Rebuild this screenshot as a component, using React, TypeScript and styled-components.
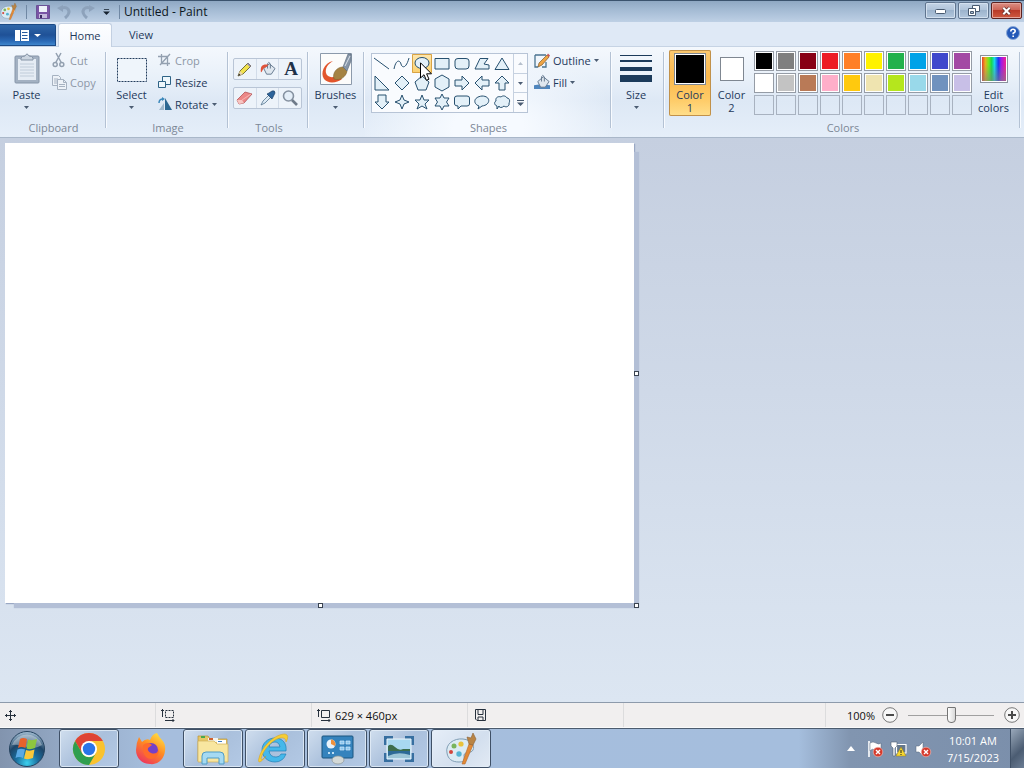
import React from "react";
import styled, { createGlobalStyle, css } from "styled-components";

const GlobalStyle = createGlobalStyle`
  * { box-sizing: border-box; }
  body {
    margin: 0;
    font-family: "Open Sans", "Noto Sans", sans-serif;
    font-size: 11px;
    line-height: 13px;
    color: #1e395b;
  }
  button { font: inherit; color: inherit; background: none; border: 0; padding: 0; margin: 0; }
  svg { display: block; flex: none; overflow: visible; }
  h1, h2, p { margin: 0; font: inherit; }
`;

const Desktop = styled.div`
  display: flex;
  flex-direction: column;
  min-height: 100vh;
`;

/* ---------- title bar ---------- */
const TitleBar = styled.header`
  display: flex;
  align-items: center;
  height: 22px;
  border-top: 1px solid #3b536e;
  background: linear-gradient(#8fa8c3, #a3bad3 40%, #bed0e5);
`;
const QuickAccess = styled.div`
  display: flex;
  align-items: center;
  gap: 7px;
`;
const IconButton = styled.button`
  display: flex;
  align-items: center;
  justify-content: center;
`;
const TitleRule = styled.span`
  width: 1px;
  height: 14px;
  background: #7088a4;
  margin: 0 2px;
`;
const Title = styled.h1`
  flex: 1;
  padding-left: 2px;
  font-size: 12px;
  line-height: 16px;
  color: #0c1722;
`;
const WindowButtons = styled.div`
  display: flex;
  gap: 2px;
  align-self: flex-start;
  padding: 1px 2px 0 0;
`;
const WindowButton = styled.button<{ $close?: boolean }>`
  display: flex;
  align-items: center;
  justify-content: center;
  width: 31px;
  height: 17px;
  border: 1px solid ${p => (p.$close ? "#5c2220" : "#60758f")};
  border-radius: 2px;
  box-shadow: inset 0 0 0 1px ${p => (p.$close ? "#e5a69c" : "#d3e0ef")};
  background: ${p =>
    p.$close
      ? "linear-gradient(#dc8f84, #cd6557 45%, #b93a28 50%, #cf5a40)"
      : "linear-gradient(#c4d4e6, #b0c4da 45%, #9db4cd 50%, #b3c7dd)"};
`;

/* ---------- tabs ---------- */
const TabRow = styled.nav`
  display: flex;
  align-items: flex-end;
  height: 24px;
  background: #dfe9f6;
`;
const FileTab = styled.button`
  display: flex;
  align-items: center;
  justify-content: center;
  gap: 5px;
  width: 56px;
  height: 22px;
  border: 1px solid #1b4a86;
  border-left: 0;
  border-radius: 0 2px 0 0;
  background: linear-gradient(#2f67a9, #1f5197 50%, #2a69b5 80%, #3f86cc);
`;
const Tab = styled.button<{ $active?: boolean }>`
  width: 54px;
  height: 23px;
  line-height: 21px;
  margin-left: 2px;
  color: #1e395b;
  ${p =>
    p.$active &&
    css`
      position: relative;
      height: 24px;
      margin-bottom: -1px;
      border: 1px solid #c3d0e2;
      border-bottom: 0;
      border-radius: 3px 3px 0 0;
      background: linear-gradient(#fdfeff, #f5f8fd);
    `}
`;
const HelpButton = styled(IconButton)`
  margin: 0 4px 6px auto;
`;

/* ---------- ribbon ---------- */
const Ribbon = styled.section`
  display: flex;
  height: 92px;
  padding: 3px 3px 0 0;
  border-top: 1px solid #c6d3e4;
  border-bottom: 1px solid #a9b7c9;
  background: linear-gradient(#f4f8fd, #e8f0f9 35%, #dde8f5 60%, #e5eef9);
`;
const Group = styled.section<{ $width?: number; $hot?: boolean }>`
  display: flex;
  flex-direction: column;
  flex: ${p => (p.$width ? `0 0 ${p.$width}px` : "1")};
  position: relative;
  background: ${p =>
    p.$hot ? "radial-gradient(ellipse at 50% 90%, #f6faff 20%, #f6faff00 75%)" : "none"};
  &::after {
    content: "";
    position: absolute;
    right: 0;
    top: 2px;
    bottom: 9px;
    width: 2px;
    background: linear-gradient(90deg, #b4c2d4 50%, #f8fbff 50%);
  }
`;
const GroupBody = styled.div<{ $pad?: number; $gap?: number }>`
  display: flex;
  align-items: flex-start;
  height: 69px;
  gap: ${p => p.$gap || 0}px;
  padding-left: ${p => p.$pad || 0}px;
`;
const GroupLabel = styled.h2`
  line-height: 18px;
  text-align: center;
  color: #7c8796;
`;
const BigButton = styled.button<{ $width: number }>`
  display: flex;
  flex-direction: column;
  align-items: center;
  width: ${p => p.$width}px;
  padding-top: 3px;
`;
const BigIcon = styled.span`
  display: flex;
  align-items: center;
  justify-content: center;
  height: 32px;
  margin-bottom: 3px;
`;
const ArrowLine = styled.span`
  display: flex;
  align-items: center;
  height: 13px;
`;
const Column = styled.div`
  display: flex;
  flex-direction: column;
`;
const SmallButton = styled.button`
  display: flex;
  align-items: center;
  gap: 3px;
  height: 22px;
  padding-bottom: 2px;
  &:disabled { color: #8d97a6; }
`;
const ToolGrid = styled.div`
  display: flex;
  flex-direction: column;
  gap: 7px;
  padding-top: 8px;
`;
const ToolRow = styled.div`
  display: flex;
  width: 69px;
  height: 22px;
  border: 1px solid #b9c5d6;
  border-radius: 2px;
  background: #edf3fa;
`;
const ToolButton = styled(IconButton)`
  flex: 1;
  & + & { border-left: 1px solid #d2dce9; }
`;
const Gallery = styled.div`
  display: flex;
  width: 157px;
  height: 60px;
  margin-top: 3px;
  border: 1px solid #b7c4d6;
  background: #f9fbfe;
`;
const ShapeGrid = styled.div`
  display: grid;
  flex: 1;
  grid-template-columns: repeat(7, 20px);
  grid-auto-rows: 19px;
`;
const ShapeButton = styled.button<{ $hot?: boolean }>`
  display: flex;
  align-items: center;
  justify-content: center;
  border-radius: 1px;
  ${p =>
    p.$hot &&
    css`
      background: linear-gradient(#fde7b0, #fbd06d);
      box-shadow: inset 0 0 0 1px #d9a344;
    `}
`;
const GalleryScroll = styled.div`
  display: flex;
  flex-direction: column;
  width: 14px;
`;
const ScrollButton = styled(IconButton)`
  flex: 1;
  border-left: 1px solid #c6d1e0;
  & + & { border-top: 1px solid #c6d1e0; }
`;
const ColorButton = styled(BigButton)<{ $active?: boolean }>`
  height: 66px;
  ${p =>
    p.$active &&
    css`
      border-radius: 2px;
      background: linear-gradient(#fbc971, #fcb84c 40%, #fecb67 75%, #ffdf8c);
      box-shadow: inset 0 0 0 1px #c1914a;
    `}
`;
const ColorBox = styled.span<{ $size: number; $color: string }>`
  width: ${p => p.$size}px;
  height: ${p => p.$size}px;
  border: 1px solid #7f8791;
  box-shadow: inset 0 0 0 1px #ffffff;
  background: ${p => p.$color};
`;
const Palette = styled.div`
  display: grid;
  grid-template-columns: repeat(10, 20px);
  gap: 2px;
  padding: 1px 2px 0;
`;
const Swatch = styled.button<{ $color?: string }>`
  height: 20px;
  border: 1px solid ${p => (p.$color ? "#959ca6" : "#a8b2c0")};
  box-shadow: ${p => (p.$color ? "inset 0 0 0 1px #ffffff" : "none")};
  background: ${p => p.$color || "transparent"};
`;
const Spectrum = styled.span`
  width: 28px;
  height: 28px;
  padding: 1px;
  border: 1px solid #8a929d;
  background:
    linear-gradient(#80808000 30%, #80808099) content-box,
    linear-gradient(90deg, #e8402c, #e8b020 14%, #70e820 28%, #18d850 40%, #18d8e8 52%, #1838f0 68%, #a018e8 80%, #f02090) content-box,
    #ffffff;
`;

/* ---------- workspace ---------- */
const Workspace = styled.main`
  flex: 1;
  padding: 5px;
  background: linear-gradient(#c5cfe0, #cfd9e8 45%, #dce6f2);
`;
const Canvas = styled.div`
  position: relative;
  width: 629px;
  height: 460px;
  background: #ffffff;
  box-shadow: 7px 7px 1px -2px #b3bfd6, 1px 1px 1px #9aa8c4;
`;
const Handle = styled.span<{ $x: string; $y: string }>`
  position: absolute;
  left: ${p => p.$x};
  top: ${p => p.$y};
  width: 5px;
  height: 5px;
  border: 1px solid #3a4350;
  background: #ffffff;
`;
const Pointer = styled.svg`
  position: absolute;
  left: 420px;
  top: 62px;
  pointer-events: none;
`;

/* ---------- status bar ---------- */
const StatusBar = styled.footer`
  display: flex;
  height: 26px;
  border-top: 1px solid #8d9aab;
  border-bottom: 1px solid #fafafa;
  background: #f1efef;
  color: #101010;
`;
const StatusCell = styled.div<{ $grow?: boolean }>`
  display: flex;
  align-items: center;
  gap: 4px;
  flex: ${p => (p.$grow ? "1" : "0 0 156px")};
  padding-left: 5px;
  border-right: 1px solid #dcdcdd;
`;
const ZoomArea = styled.div`
  display: flex;
  align-items: center;
  justify-content: flex-end;
  width: 198px;
  padding-right: 4px;
`;
const ZoomText = styled.span`
  margin-right: 7px;
`;
const ZoomSlider = styled.input`
  appearance: none;
  width: 86px;
  height: 18px;
  margin: 0 10px;
  background: linear-gradient(#a0a0a0, #a0a0a0) center / 100% 1px no-repeat;
  &::-webkit-slider-thumb {
    appearance: none;
    width: 9px;
    height: 16px;
    border: 1px solid #757575;
    border-radius: 1px 1px 4px 4px;
    background: linear-gradient(90deg, #ffffff, #d8d8d8);
  }
`;

/* ---------- taskbar ---------- */
const Taskbar = styled.nav`
  display: flex;
  align-items: stretch;
  height: 40px;
  border-top: 1px solid #4c5b6e;
  background: linear-gradient(90deg, #8294ae, #93a8c4 6%, #a6bedd 15%, #a5bedd 78%, #8195b0 83%, #7b8fab);
`;
const Start = styled(IconButton)`
  width: 54px;
  margin-right: 5px;
`;
const TaskButton = styled.button<{ $state: "open" | "active" | "pinned" }>`
  display: flex;
  align-items: center;
  justify-content: center;
  width: 60px;
  margin-right: 2px;
  border-radius: 3px;
  ${p =>
    p.$state !== "pinned" &&
    css`
      border: 1px solid #3f5066;
      box-shadow: inset 0 0 0 1px #e4edf7cc;
      background: ${p.$state === "active"
        ? "linear-gradient(135deg, #e6eef8, #d3dfee 60%, #e2eaf4)"
        : "linear-gradient(135deg, #d0deee, #aac0dc 50%, #b3c9e5)"};
    `}
`;
const Tray = styled.div`
  display: flex;
  align-items: center;
  gap: 8px;
  margin-left: auto;
`;
const TrayButton = styled(IconButton)`
  width: 16px;
`;
const Clock = styled.time`
  width: 58px;
  margin-left: 5px;
  text-align: center;
  line-height: 17px;
  color: #ffffff;
`;
const ShowDesktop = styled.button`
  align-self: stretch;
  width: 14px;
  border-left: 1px solid #3f5066;
  background: linear-gradient(135deg, #9aa9bb, #4b5c72 60%, #6b7d94);
`;

const ink = "#27506f";

const shapes: { name: string; d: string }[] = [
  { name: "Line", d: "M2 4L17 15" },
  { name: "Curve", d: "M2 15C4 5 8 6 9 10S14 15 17 4" },
  { name: "Oval", d: "M3 9A7 5.500 0 1 0 17 9A7 5.500 0 1 0 3 9Z" },
  { name: "Rectangle", d: "M3 4.500H17V15H3Z" },
  { name: "Rounded rectangle", d: "M6 4.500H14Q17 4.500 17 7V12Q17 15 14 15H6Q3 15 3 12V7Q3 4.500 6 4.500Z" },
  { name: "Polygon", d: "M3 15L8 4.500H16L12 10L17 11V15Z" },
  { name: "Triangle", d: "M10 4L17 15.500H3Z" },
  { name: "Right triangle", d: "M3 3V17H17Z" },
  { name: "Diamond", d: "M10 3L17 10L10 17L3 10Z" },
  { name: "Pentagon", d: "M10 3L17 9L14 17H6L3 9Z" },
  { name: "Hexagon", d: "M10 2L17 6V14L10 18L3 14V6Z" },
  { name: "Right arrow", d: "M3 7H10V3L17 10L10 17V13H3Z" },
  { name: "Left arrow", d: "M17 7H10V3L3 10L10 17V13H17Z" },
  { name: "Up arrow", d: "M7 17V10H3L10 3L17 10H13V17Z" },
  { name: "Down arrow", d: "M6 3V10H3L10 17L17 10H14V3Z" },
  { name: "Four-point star", d: "M10 3L12 8L17 10L12 12L10 17L8 12L3 10L8 8Z" },
  { name: "Five-point star", d: "M10 3L12 8H17L13 12L15 17L10 14L5 17L7 12L3 8H8Z" },
  { name: "Six-point star", d: "M10 2L12 6H17L14.500 10L17 14H12L10 18L8 14H3L5.500 10L3 6H8Z" },
  { name: "Rounded callout", d: "M5 4H15Q17.500 4 17.500 6V12Q17.500 14 15 14H9L6 17V14Q2.500 14 2.500 12V6Q2.500 4 5 4Z" },
  { name: "Oval callout", d: "M7 14C1 12 1 5 10 4C19 4 19 13 10 14L6 17Z" },
  { name: "Cloud callout", d: "M5 14C2 13 2 10 4 9C3 5 7 4 9 5C11 3 14 4 15 6C18 6 18 10 17 11C18 14 14 16 12 14C10 16 7 16 7 14L5 17Z" },
];

const palette = [
  "#000000", "#7f7f7f", "#880015", "#ed1c24", "#ff7f27", "#fff200", "#22b14c", "#00a2e8", "#3f48cc", "#a349a4",
  "#ffffff", "#c3c3c3", "#b97a57", "#ffaec9", "#ffc90e", "#efe4b0", "#b5e61d", "#99d9ea", "#7092be", "#c8bfe7",
];

const Caret = ({ color = "#4b5c72", size = 5 }: { color?: string; size?: number }) => (
  <svg width={size} height="3" viewBox="0 0 6 3" preserveAspectRatio="none"><path d="M0 0H6L3 3Z" fill={color} /></svg>
);

const PaletteIcon = ({ size }: { size: number }) => (
  <svg width={size} height={size} viewBox="0 0 32 32">
    <path d="M2 20C0 11 9 5 18 6C27 7 30 13 28 17C26 21 20 18 19 22C19 26 21 29 14 29C7 29 3 26 2 20Z" fill="#dcebf3" stroke="#7f9db4" />
    <circle cx="6" cy="19" r="2" fill="#d3453c" /><circle cx="9" cy="13" r="2.500" fill="#79b45c" />
    <circle cx="16" cy="11" r="2.600" fill="#e9c23a" /><circle cx="14" cy="21" r="2.700" fill="#55b4d2" />
    <path d="M17 31L24 11L28 12L20 31Z" fill="#e38a35" stroke="#b0662a" strokeWidth=".6" />
    <path d="M24 11L22 4L26 5L28 0L31 6L28 12Z" fill="#b98445" stroke="#8a5f30" strokeWidth=".6" />
  </svg>
);

const Pencil = () => (
  <svg width="17" height="17" viewBox="0 0 17 17">
    <path d="M2 15L4 10L12 2L15 5L7 13Z" fill="#f1e24d" stroke="#55521f" strokeWidth=".8" />
    <path d="M12 2L15 5L14 6L11 3Z" fill="#8f88bd" /><path d="M2 15L4 10L7 13Z" fill="#ecd7b0" /><path d="M2 15L3 12.500L4.500 14Z" fill="#222" />
  </svg>
);
const Bucket = ({ pouring }: { pouring?: boolean }) => (
  <svg width="16" height="16" viewBox="0 0 17 17">
    {!pouring && <path d="M0 12L7 11L17 12V16H0Z" fill="#4f86be" />}
    <path d="M4 8L10 3L16 8L12 14L7 14Z" fill="#dfe7ef" stroke="#62768d" />
    <path d="M8 8V3Q9 0 11 3V8" fill="none" stroke="#62768d" />
    {pouring && <path d="M9 4C3 3 0 5 1 12C3 11 2 8 7 6Z" fill="#e0543c" />}
  </svg>
);
const ErrorBadge = ({ x, y }: { x: number; y: number }) => (
  <g transform={`translate(${x} ${y})`}>
    <circle r="4.800" fill="#d63a2c" stroke="#f3c3bd" strokeWidth=".6" />
    <path d="M-2 -2L2 2M2 -2L-2 2" stroke="#fff" strokeWidth="1.400" />
  </g>
);
const RoundSign = ({ plus }: { plus?: boolean }) => (
  <svg width="16" height="16" viewBox="0 0 16 16">
    <circle cx="8" cy="8" r="7.300" fill="#f7f7f7" stroke="#777" />
    <path d={plus ? "M4 8H12M8 4V12" : "M4 8H12"} stroke="#4a4a4a" strokeWidth="2" />
  </svg>
);

export default function App() {
  return (
    <Desktop>
      <GlobalStyle />
      <TitleBar>
        <QuickAccess>
          <PaletteIcon size={17} />
          <TitleRule />
          <IconButton aria-label="Save">
            <svg width="14" height="14" viewBox="0 0 14 14">
              <path d="M.5.500H13.500V13.500H.5Z" fill="#7a55a5" stroke="#6a5296" />
              <path d="M3 1H11V7H3Z" fill="#eef2fa" /><path d="M3 9H11V13H3Z" fill="#c5bbdc" /><path d="M4 10H6V13H4Z" fill="#3b2b60" />
            </svg>
          </IconButton>
          <IconButton aria-label="Undo" disabled>
            <svg width="16" height="14" viewBox="0 0 16 14"><path d="M3 4Q8 1 11 4Q14 8 8 13" fill="none" stroke="#8da2bb" strokeWidth="3" /><path d="M0 3L6 0V7Z" fill="#8da2bb" /></svg>
          </IconButton>
          <IconButton aria-label="Redo" disabled>
            <svg width="16" height="14" viewBox="0 0 16 14"><path d="M12 4Q7 1 4 4Q1 8 7 13" fill="none" stroke="#8da2bb" strokeWidth="3" /><path d="M15 3L9 0V7Z" fill="#8da2bb" /></svg>
          </IconButton>
          <IconButton aria-label="Customize quick access toolbar">
            <svg width="7" height="6" viewBox="0 0 8 7"><path d="M1 0H7V1H1ZM0 3H8L4 7Z" fill="#16222f" /></svg>
          </IconButton>
          <TitleRule />
        </QuickAccess>
        <Title>Untitled - Paint</Title>
        <WindowButtons>
          <WindowButton aria-label="Minimize">
            <svg width="11" height="5" viewBox="0 0 11 5"><rect x=".5" y="1.500" width="10" height="4" rx="1" fill="#fff" stroke="#485a70" /></svg>
          </WindowButton>
          <WindowButton aria-label="Restore">
            <svg width="12" height="11" viewBox="0 0 12 11" fill="#fff" stroke="#485a70">
              <path d="M4.500.5H11.500V6.500H4.500Z" /><path d="M.5 3.500H7.500V10.500H.5Z" /><path d="M2.500 6.500H5.500V8.500H2.500Z" fill="#a9bdd3" />
            </svg>
          </WindowButton>
          <WindowButton $close aria-label="Close">
            <svg width="11" height="8" viewBox="0 0 12 10"><path d="M2 1L10 9M10 1L2 9" stroke="#5e2b27" strokeWidth="4.500" /><path d="M2 1L10 9M10 1L2 9" stroke="#fff" strokeWidth="2.600" /></svg>
          </WindowButton>
        </WindowButtons>
      </TitleBar>

      <TabRow>
        <FileTab aria-label="Paint menu">
          <svg width="14" height="11" viewBox="0 0 14 11"><path d="M0 0H14V11H0Z" fill="#fff" /><path d="M5.500 0V11M7 2.500H12.500M7 5.500H12.500M7 8.500H12.500" stroke="#2a5c9e" /></svg>
          <Caret color="#ffffff" size={7} />
        </FileTab>
        <Tab $active>Home</Tab>
        <Tab>View</Tab>
        <HelpButton aria-label="Help">
          <svg width="14" height="14" viewBox="0 0 14 14">
            <circle cx="7" cy="7" r="6.500" fill="#2459b8" stroke="#8aa8d8" />
            <path d="M4.800 5.500Q4.800 3.300 7 3.300T9.200 5.300Q9.200 6.400 7.200 7.300V8.300M7.200 9.500V11" fill="none" stroke="#fff" strokeWidth="1.600" />
          </svg>
        </HelpButton>
      </TabRow>

      <Ribbon>
        <Group $width={107}>
          <GroupBody $pad={6} $gap={5}>
            <BigButton $width={41}>
              <BigIcon>
                <svg width="26" height="32" viewBox="0 0 26 32">
                  <rect x="1" y="3" width="24" height="27" rx="1" fill="#a3b1c2" stroke="#8796a9" />
                  <path d="M4 6H22V27H4Z" fill="#e5ecf4" /><path d="M7 5Q8 3 11 3Q13-1 15 3Q18 3 19 5V7H7Z" fill="#cbd5e0" stroke="#8594a6" />
                  <path d="M6 11H20M6 14H20M6 17H20M6 20H20M6 23H20" stroke="#c0ccd9" />
                </svg>
              </BigIcon>
              Paste
              <ArrowLine><Caret /></ArrowLine>
            </BigButton>
            <Column>
              <SmallButton disabled>
                <svg width="15" height="16" viewBox="0 0 15 16" fill="none" stroke="#93a0b0" strokeWidth="1.500">
                  <path d="M4 1L9.500 11M9 1L3.500 11" /><circle cx="3.200" cy="12.500" r="2" /><circle cx="9.800" cy="12.500" r="2" />
                </svg>
                Cut
              </SmallButton>
              <SmallButton disabled>
                <svg width="15" height="16" viewBox="0 0 15 16" fill="#edf2f8" stroke="#a6b2c1">
                  <path d="M.5 1.500H6.500L8.500 3.500V11.500H.5ZM2 5H6M2 7H6M2 9H6" /><path d="M5.500 5.500H11.500L14.500 8.500V15.500H5.500ZM11.500 5.500V8.500H14.500M7 10.500H13M7 12.500H13" />
                </svg>
                Copy
              </SmallButton>
            </Column>
          </GroupBody>
          <GroupLabel>Clipboard</GroupLabel>
        </Group>

        <Group $width={122}>
          <GroupBody $pad={4} $gap={6}>
            <BigButton $width={41}>
              <BigIcon>
                <svg width="31" height="26" viewBox="0 0 31 26"><path d="M1.500 2.500H30.500V25.500H1.500Z" fill="#eff5fb" stroke="#223c5c" strokeDasharray="2 1" /></svg>
              </BigIcon>
              Select
              <ArrowLine><Caret /></ArrowLine>
            </BigButton>
            <Column>
              <SmallButton disabled>
                <svg width="14" height="14" viewBox="0 0 14 14" fill="none" stroke="#93a0b0" strokeWidth="1.300"><path d="M3.500 1V10.500H12M0 3.500H9.500V13M2 12L12 1" /></svg>
                Crop
              </SmallButton>
              <SmallButton>
                <svg width="14" height="14" viewBox="0 0 14 14" fill="#eef7fc" stroke="#2e6386"><path d="M4.500 1.500H12.500V9.500H4.500Z" /><path d="M.5 6.500H7.500V12.500H.5Z" /></svg>
                Resize
              </SmallButton>
              <SmallButton>
                <svg width="14" height="14" viewBox="0 0 14 14"><path d="M7 1L14 13H7Z" fill="#2c6792" /><path d="M6 6V13H1Z" fill="#9eb7cc" /><path d="M1 6Q1 2 5 2" fill="none" stroke="#3b88bb" strokeWidth="1.500" /><path d="M4 0L7 2L4 4Z" fill="#3b88bb" /></svg>
                Rotate
                <Caret />
              </SmallButton>
            </Column>
          </GroupBody>
          <GroupLabel>Image</GroupLabel>
        </Group>

        <Group $width={80}>
          <GroupBody $pad={4}>
            <ToolGrid>
              <ToolRow>
                <ToolButton aria-label="Pencil"><Pencil /></ToolButton>
                <ToolButton aria-label="Fill with color"><Bucket pouring /></ToolButton>
                <ToolButton aria-label="Text">
                  <svg width="14" height="14" viewBox="0 0 14 14"><text x="8" y="13" textAnchor="middle" fontFamily="Liberation Serif, serif" fontWeight="bold" fontSize="19" fill="#1f3149">A</text></svg>
                </ToolButton>
              </ToolRow>
              <ToolRow>
                <ToolButton aria-label="Eraser">
                  <svg width="17" height="15" viewBox="0 0 17 15"><path d="M1 9L9 1L16 3L8 12L3 13Z" fill="#ec8787" stroke="#b25658" strokeWidth=".8" /><path d="M1 9L6 9L8 12L3 13Z" fill="#f7c5c2" /><path d="M6 9L15 3" stroke="#f9b5b2" /></svg>
                </ToolButton>
                <ToolButton aria-label="Color picker">
                  <svg width="16" height="16" viewBox="0 0 16 16"><path d="M1 15L3 11L9 5L11 7L5 13Z" fill="#dceaf5" stroke="#56758f" strokeWidth=".8" /><path d="M7 4L9 3L12 1Q15 0 15 3L13 7L12 9Z" fill="#2d649b" stroke="#1c3f66" strokeWidth=".7" /></svg>
                </ToolButton>
                <ToolButton aria-label="Magnifier">
                  <svg width="16" height="16" viewBox="0 0 16 16"><circle cx="6.500" cy="6" r="5" fill="#e4eef8" stroke="#8591a0" strokeWidth="1.600" /><path d="M10 10L15 15" stroke="#6f7b8a" strokeWidth="2.600" /></svg>
                </ToolButton>
              </ToolRow>
            </ToolGrid>
          </GroupBody>
          <GroupLabel>Tools</GroupLabel>
        </Group>

        <Group $width={56}>
          <GroupBody $pad={1}>
            <BigButton $width={51}>
              <BigIcon>
                <svg width="32" height="32" viewBox="0 0 32 32">
                  <path d="M.5.500H31.500V31.500H.5Z" fill="#fcfcfb" stroke="#8c9aab" />
                  <path d="M13 8C4 10 0 20 4 26C8 31 17 30 22 26L17 22C13 26 7 24 6 20C5 15 8 11 13 8Z" fill="#e2552c" />
                  <path d="M14 26C12 20 17 14 23 14L27 18C26 24 20 28 14 26Z" fill="#a58343" stroke="#7d6330" strokeWidth=".6" />
                  <path d="M23 14L28 1H31V8L27 18Z" fill="#8796a8" stroke="#566577" strokeWidth=".6" /><path d="M25 13L30 3" stroke="#dbe2ea" />
                </svg>
              </BigIcon>
              Brushes
              <ArrowLine><Caret /></ArrowLine>
            </BigButton>
          </GroupBody>
        </Group>

        <Group $width={247} $hot>
          <GroupBody $pad={6} $gap={6}>
            <Gallery>
              <ShapeGrid>
                {shapes.map(s => (
                  <ShapeButton key={s.name} aria-label={s.name} $hot={s.name === "Oval"}>
                    <svg width="20" height="20" viewBox="0 0 20 20">
                      <path d={s.d} fill={s.name === "Line" || s.name === "Curve" ? "none" : "#e3f0f8"} stroke={ink} strokeWidth="1" />
                    </svg>
                  </ShapeButton>
                ))}
              </ShapeGrid>
              <GalleryScroll>
                <ScrollButton aria-label="Scroll up" disabled><svg width="5" height="3" viewBox="0 0 5 3"><path d="M0 3H5L2.500 0Z" fill="#b5bfcc" /></svg></ScrollButton>
                <ScrollButton aria-label="Scroll down"><Caret /></ScrollButton>
                <ScrollButton aria-label="More shapes"><svg width="7" height="6" viewBox="0 0 7 6"><path d="M0 0H7V1H0ZM0 2.500H7L3.500 6Z" fill="#4b5c72" /></svg></ScrollButton>
              </GalleryScroll>
            </Gallery>
            <Column>
              <SmallButton>
                <svg width="16" height="15" viewBox="0 0 16 15">
                  <path d="M1 2H12M1 2V14H4M12 9V14H8" fill="none" stroke="#4a7390" strokeWidth="1.300" />
                  <path d="M4 14L5 10L13 2L15 4L8 12Z" fill="#efa445" stroke="#7d5a2a" strokeWidth=".7" /><path d="M13 2L15 4L16 2.500L14 .5Z" fill="#c8555a" />
                </svg>
                Outline
                <Caret />
              </SmallButton>
              <SmallButton>
                <Bucket />
                Fill
                <Caret />
              </SmallButton>
            </Column>
          </GroupBody>
          <GroupLabel>Shapes</GroupLabel>
        </Group>

        <Group $width={53}>
          <GroupBody $pad={1}>
            <BigButton $width={46}>
              <BigIcon>
                <svg width="32" height="28" viewBox="0 0 32 28"><path d="M0 0H32V1H0ZM0 5H32V7H0ZM0 12H32V16H0ZM0 20H32V27H0Z" fill="#1c3b5b" /></svg>
              </BigIcon>
              Size
              <ArrowLine><Caret /></ArrowLine>
            </BigButton>
          </GroupBody>
        </Group>

        <Group>
          <GroupBody $pad={4}>
            <ColorButton $width={42} $active>
              <BigIcon><ColorBox $size={32} $color="#000000" /></BigIcon>
              Color<br />1
            </ColorButton>
            <ColorButton $width={41}>
              <BigIcon><ColorBox $size={24} $color="#ffffff" /></BigIcon>
              Color<br />2
            </ColorButton>
            <Palette>
              {Array.from({ length: 30 }, (_, i) => (
                <Swatch key={i} $color={palette[i]} aria-label={palette[i] || "Empty custom color"} />
              ))}
            </Palette>
            <BigButton $width={39}>
              <BigIcon><Spectrum /></BigIcon>
              Edit<br />colors
            </BigButton>
          </GroupBody>
          <GroupLabel>Colors</GroupLabel>
        </Group>
      </Ribbon>

      <Workspace>
        <Canvas>
          <Handle $x="100%" $y="calc(50% - 2px)" />
          <Handle $x="calc(50% - 2px)" $y="100%" />
          <Handle $x="100%" $y="100%" />
        </Canvas>
      </Workspace>

      <StatusBar>
        <StatusCell>
          <svg width="11" height="11" viewBox="0 0 11 11"><path d="M5.500 0V11M0 5.500H11M4 2L5.500.5L7 2M4 9L5.500 10.500L7 9M2 4L.5 5.500L2 7M9 4L10.500 5.500L9 7" fill="none" stroke="#26303c" /></svg>
        </StatusCell>
        <StatusCell>
          <svg width="14" height="13" viewBox="0 0 14 13" fill="none" stroke="#26303c"><path d="M1.500 0V8M0 2L1.500.5L3 2M4 11.500H13M11.500 10L13 11.500L11.500 13" /><path d="M4.500 1.500H12.500V8.500H4.500Z" strokeDasharray="2 1" /></svg>
        </StatusCell>
        <StatusCell>
          <svg width="14" height="13" viewBox="0 0 14 13" fill="none" stroke="#26303c"><path d="M1.500 0V8M0 2L1.500.5L3 2M4 11.500H13M11.500 10L13 11.500L11.500 13M4.500 1.500H12.500V8.500H4.500Z" /></svg>
          629 × 460px
        </StatusCell>
        <StatusCell>
          <svg width="13" height="12" viewBox="0 0 13 12" fill="none" stroke="#26303c"><path d="M2.500.5H12.500V11.500H4L2.500 10ZM5 .5V5.500H10V.5M5 11V8H10V11" /></svg>
        </StatusCell>
        <StatusCell $grow />
        <ZoomArea>
          <ZoomText>100%</ZoomText>
          <IconButton aria-label="Zoom out"><RoundSign /></IconButton>
          <ZoomSlider type="range" min={0} max={100} defaultValue={50} aria-label="Zoom" />
          <IconButton aria-label="Zoom in"><RoundSign plus /></IconButton>
        </ZoomArea>
      </StatusBar>

      <Taskbar>
        <Start aria-label="Start">
          <svg width="38" height="38" viewBox="0 0 38 38">
            <defs>
              <radialGradient id="orb" cx=".5" cy=".9" r=".9"><stop offset="0" stopColor="#3bd0ee" /><stop offset=".35" stopColor="#1b6f9f" /><stop offset=".65" stopColor="#1d4568" /><stop offset="1" stopColor="#a9c3d8" /></radialGradient>
            </defs>
            <circle cx="19" cy="19" r="17.500" fill="url(#orb)" stroke="#24425e" />
            <path d="M4 15A16 16 0 0 1 34 15Q26 20 19 17T4 15Z" fill="#ffffff" opacity=".35" />
            <path d="M12 9Q15 7 19 9L17.500 18Q13 16 10 18Z" fill="#e8622c" /><path d="M20 9.500Q24 11 29 9L27 18Q22 20 18.500 18.500Z" fill="#8ec63f" />
            <path d="M9.500 19.500Q13 18 17 19.500L15 28Q11 26 7.500 28Z" fill="#5aa9e4" /><path d="M18 20Q22 21.500 26.500 19.500L25 28Q20 30 16 28.500Z" fill="#fac83a" />
          </svg>
        </Start>
        <TaskButton $state="open" aria-label="Google Chrome">
          <svg width="32" height="32" viewBox="0 0 32 32">
            <circle cx="16" cy="16" r="16" fill="#f9c22e" />
            <path d="M2.100 8A16 16 0 0 1 29.900 8H16L9 20Z" fill="#de4436" /><path d="M2.100 8A16 16 0 0 0 16 32L23 20A8 8 0 0 1 9 20Z" fill="#2f9e4f" />
            <circle cx="16" cy="16" r="8" fill="#fff" /><circle cx="16" cy="16" r="6.200" fill="#2a74e8" />
          </svg>
        </TaskButton>
        <TaskButton $state="pinned" aria-label="Firefox">
          <svg width="32" height="32" viewBox="0 0 32 32">
            <defs><linearGradient id="fox" x1=".8" y1="0" x2=".2" y2="1"><stop offset="0" stopColor="#ffe145" /><stop offset=".45" stopColor="#ff8b22" /><stop offset="1" stopColor="#ec2f62" /></linearGradient></defs>
            <path d="M4 4L7 9Q11 5 15 7Q17 1 22 0Q24 4 27 7Q31 11 30 18C29 27 22 32 15 31C7 31 1 25 1 17Q1 10 4 4Z" fill="url(#fox)" />
            <circle cx="16" cy="17" r="7" fill="#7540c8" /><path d="M8 12Q13 8 17 12L13 15Q12 18 16 20Q22 22 24 16Q24 25 16 26Q7 25 8 12Z" fill="#ff6b2b" />
          </svg>
        </TaskButton>
        <TaskButton $state="open" aria-label="File Explorer">
          <svg width="34" height="32" viewBox="0 0 34 32">
            <path d="M2 3H12L14 6H31V28H2Z" fill="#e6c766" stroke="#b89336" strokeWidth=".7" /><path d="M5 3H9V5H5Z" fill="#4aa84c" /><path d="M12 5H22V9H12Z" fill="#f4f4ef" /><path d="M13 5H17V7H13Z" fill="#d1602e" /><path d="M21 7H30V11H21Z" fill="#fff" /><path d="M22 8H26V9H22Z" fill="#3f7fc4" />
            <path d="M2 8H18L21 11H32V29H2Z" fill="#f8e6a0" stroke="#d0b05a" strokeWidth=".7" />
            <path d="M6 31V23Q6 19 10 19H24Q28 19 28 23V31H23V25H11V31Z" fill="#a5daf2" stroke="#4f9cc6" />
          </svg>
        </TaskButton>
        <TaskButton $state="open" aria-label="Internet Explorer">
          <svg width="34" height="32" viewBox="0 0 34 32">
            <path d="M28 18H11Q12 24 18 24Q22 24 23 21H28Q25 29 17 29C9 29 4 23 4 17C4 10 10 5 17 5C25 5 29 11 28 18ZM11 14H22Q21 9 17 9Q12 9 11 14Z" fill="#45b8ea" stroke="#207fb8" strokeWidth=".7" />
            <path d="M8 23C3 30-1 31 1 25C4 13 17 1 27 1Q32 2 28 9Q28 4 22 5C13 7 4 19 3 26Q4 28 8 23Z" fill="#f6cd35" stroke="#d49e1d" strokeWidth=".5" />
          </svg>
        </TaskButton>
        <TaskButton $state="open" aria-label="Control Panel">
          <svg width="34" height="30" viewBox="0 0 34 30">
            <rect x="2" y="2" width="31" height="22" rx="1" fill="#3583bd" stroke="#1b557f" /><circle cx="11" cy="10" r="4.500" fill="#e8f2fa" /><path d="M11 10V5.500A4.500 4.500 0 0 1 15 12Z" fill="#f0913b" />
            <path d="M20 7H24V10H20ZM26 7H30V10H26ZM20 13H24V16H20ZM26 13H30V16H26Z" fill="#8cc7ee" stroke="#d2eafa" strokeWidth=".7" /><path d="M8 18H10V20H8ZM12 18H14V20H12Z" fill="#bfe0f5" />
            <ellipse cx="18" cy="26" rx="6" ry="4" fill="#d4d9d7" stroke="#8c9595" strokeWidth=".7" />
          </svg>
        </TaskButton>
        <TaskButton $state="open" aria-label="Photo Viewer">
          <svg width="32" height="28" viewBox="0 0 32 28">
            <path d="M1 1H10V4H4V10H1ZM22 1H31V10H28V4H22ZM1 18H4V24H10V27H1ZM28 18H31V27H22V24H28Z" fill="#376fa0" />
            <path d="M4 4H28V24H4Z" fill="#a8d8f0" stroke="#eef6fb" /><path d="M5 11Q8 8 12 12T20 14H27V17H5Z" fill="#3c6d4c" /><path d="M5 16H27V23H5Z" fill="#2d6a96" /><path d="M5 21Q15 16 27 20V23H5Z" fill="#9cc5d6" />
          </svg>
        </TaskButton>
        <TaskButton $state="active" aria-label="Paint"><PaletteIcon size={32} /></TaskButton>
        <Tray>
          <TrayButton aria-label="Show hidden icons"><svg width="8" height="5" viewBox="0 0 8 5"><path d="M0 5H8L4 0Z" fill="#fff" /></svg></TrayButton>
          <TrayButton aria-label="Action Center">
            <svg width="16" height="16" viewBox="0 0 16 16"><path d="M2 0V16" stroke="#fff" strokeWidth="1.600" /><path d="M3 2Q6 0 9 2T14 2V10Q11 11 8 9T3 10Z" fill="#fff" stroke="#57657a" strokeWidth=".5" /><ErrorBadge x={11} y={11} /></svg>
          </TrayButton>
          <TrayButton aria-label="Network">
            <svg width="16" height="16" viewBox="0 0 16 16"><path d="M5.500 3.500H15V12H5.500Z" fill="#65788d" stroke="#fff" strokeWidth="1.200" /><path d="M0 1H6V5L4 7V15H2V7L0 5Z" fill="#fff" stroke="#4f5f72" strokeWidth=".6" /><path d="M10 6L15 15H5Z" fill="#f6d730" stroke="#9c7f12" strokeWidth=".5" /><path d="M10 9V12M10 13V14" stroke="#222" /></svg>
          </TrayButton>
          <TrayButton aria-label="Volume muted">
            <svg width="16" height="16" viewBox="0 0 16 16"><path d="M1 5H4L8 1V15L4 11H1Z" fill="#fff" stroke="#57657a" strokeWidth=".5" /><ErrorBadge x={11} y={11} /></svg>
          </TrayButton>
          <Clock>10:01 AM<br />7/15/2023</Clock>
          <ShowDesktop aria-label="Show desktop" />
        </Tray>
      </Taskbar>
      <Pointer width="12" height="19" viewBox="0 0 12 19"><path d="M.5.800V16L4 12.700L6.400 18.300L9 17.200L6.600 11.800H11.500Z" fill="#fff" stroke="#000" /></Pointer>
    </Desktop>
  );
}
